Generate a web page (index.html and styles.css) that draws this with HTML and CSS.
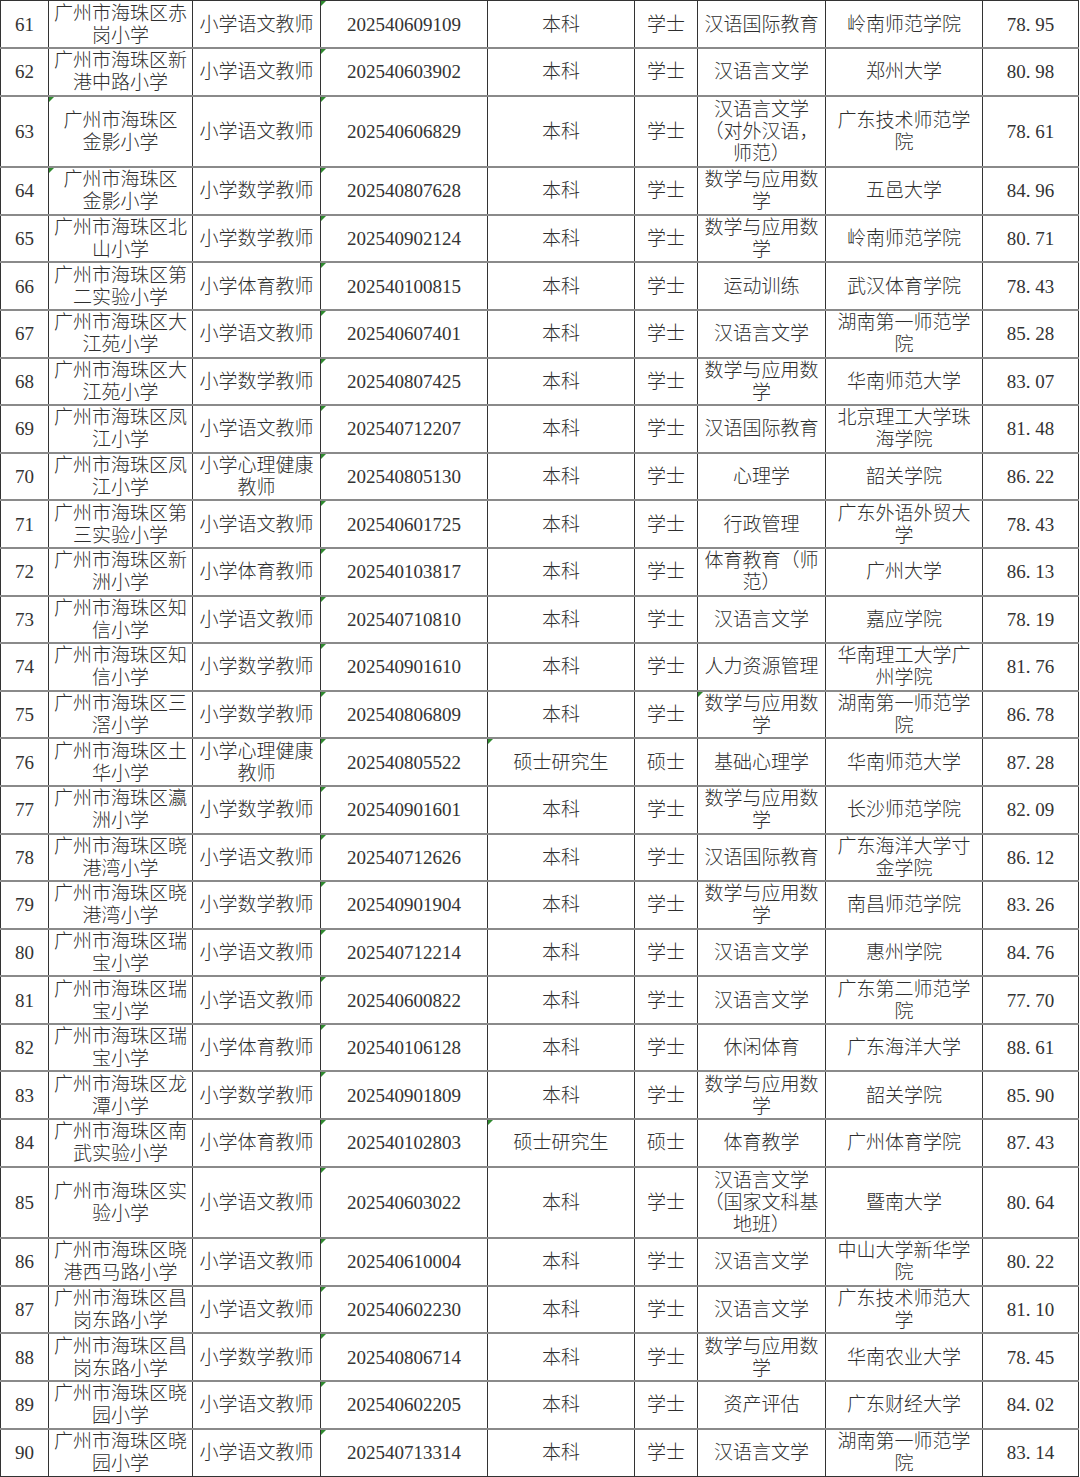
FILE: index.html
```html
<!DOCTYPE html>
<html lang="zh-CN">
<head>
<meta charset="utf-8">
<title>录用名单</title>
<link rel="stylesheet" href="styles.css">
</head>
<body>
<table class="list">
<colgroup>
<col class="c-no"><col class="c-school"><col class="c-pos"><col class="c-id"><col class="c-edu"><col class="c-deg"><col class="c-major"><col class="c-uni"><col class="c-score">
</colgroup>
<tbody>
<tr><td class="num">61</td><td>广州市海珠区赤<br>岗小学</td><td>小学语文教师</td><td class="num f">202540609109</td><td>本科</td><td>学士</td><td>汉语国际教育</td><td>岭南师范学院</td><td class="num">78<span class="dot">.</span>95</td></tr>
<tr><td class="num">62</td><td>广州市海珠区新<br>港中路小学</td><td>小学语文教师</td><td class="num f">202540603902</td><td>本科</td><td>学士</td><td>汉语言文学</td><td>郑州大学</td><td class="num">80<span class="dot">.</span>98</td></tr>
<tr class="tall"><td class="num">63</td><td class="f">广州市海珠区<br>金影小学</td><td>小学语文教师</td><td class="num f">202540606829</td><td>本科</td><td>学士</td><td>汉语言文学<br>（对外汉语，<br>师范）</td><td>广东技术师范学<br>院</td><td class="num">78<span class="dot">.</span>61</td></tr>
<tr><td class="num">64</td><td class="f">广州市海珠区<br>金影小学</td><td>小学数学教师</td><td class="num f">202540807628</td><td>本科</td><td>学士</td><td>数学与应用数<br>学</td><td>五邑大学</td><td class="num">84<span class="dot">.</span>96</td></tr>
<tr><td class="num">65</td><td>广州市海珠区北<br>山小学</td><td>小学数学教师</td><td class="num f">202540902124</td><td>本科</td><td>学士</td><td>数学与应用数<br>学</td><td>岭南师范学院</td><td class="num">80<span class="dot">.</span>71</td></tr>
<tr><td class="num">66</td><td>广州市海珠区第<br>二实验小学</td><td>小学体育教师</td><td class="num f">202540100815</td><td>本科</td><td>学士</td><td>运动训练</td><td>武汉体育学院</td><td class="num">78<span class="dot">.</span>43</td></tr>
<tr><td class="num">67</td><td>广州市海珠区大<br>江苑小学</td><td>小学语文教师</td><td class="num f">202540607401</td><td>本科</td><td>学士</td><td>汉语言文学</td><td>湖南第一师范学<br>院</td><td class="num">85<span class="dot">.</span>28</td></tr>
<tr><td class="num">68</td><td>广州市海珠区大<br>江苑小学</td><td>小学数学教师</td><td class="num f">202540807425</td><td>本科</td><td>学士</td><td>数学与应用数<br>学</td><td>华南师范大学</td><td class="num">83<span class="dot">.</span>07</td></tr>
<tr><td class="num">69</td><td>广州市海珠区凤<br>江小学</td><td>小学语文教师</td><td class="num f">202540712207</td><td>本科</td><td>学士</td><td>汉语国际教育</td><td>北京理工大学珠<br>海学院</td><td class="num">81<span class="dot">.</span>48</td></tr>
<tr><td class="num">70</td><td>广州市海珠区凤<br>江小学</td><td>小学心理健康<br>教师</td><td class="num f">202540805130</td><td>本科</td><td>学士</td><td>心理学</td><td>韶关学院</td><td class="num">86<span class="dot">.</span>22</td></tr>
<tr><td class="num">71</td><td>广州市海珠区第<br>三实验小学</td><td>小学语文教师</td><td class="num f">202540601725</td><td>本科</td><td>学士</td><td>行政管理</td><td>广东外语外贸大<br>学</td><td class="num">78<span class="dot">.</span>43</td></tr>
<tr><td class="num">72</td><td>广州市海珠区新<br>洲小学</td><td>小学体育教师</td><td class="num f">202540103817</td><td>本科</td><td>学士</td><td>体育教育（师<br>范）</td><td>广州大学</td><td class="num">86<span class="dot">.</span>13</td></tr>
<tr><td class="num">73</td><td>广州市海珠区知<br>信小学</td><td>小学语文教师</td><td class="num f">202540710810</td><td>本科</td><td>学士</td><td>汉语言文学</td><td>嘉应学院</td><td class="num">78<span class="dot">.</span>19</td></tr>
<tr><td class="num">74</td><td>广州市海珠区知<br>信小学</td><td>小学数学教师</td><td class="num f">202540901610</td><td>本科</td><td>学士</td><td>人力资源管理</td><td>华南理工大学广<br>州学院</td><td class="num">81<span class="dot">.</span>76</td></tr>
<tr><td class="num">75</td><td>广州市海珠区三<br>滘小学</td><td>小学数学教师</td><td class="num f">202540806809</td><td>本科</td><td>学士</td><td class="f">数学与应用数<br>学</td><td>湖南第一师范学<br>院</td><td class="num">86<span class="dot">.</span>78</td></tr>
<tr><td class="num">76</td><td>广州市海珠区土<br>华小学</td><td>小学心理健康<br>教师</td><td class="num f">202540805522</td><td class="f">硕士研究生</td><td>硕士</td><td>基础心理学</td><td>华南师范大学</td><td class="num">87<span class="dot">.</span>28</td></tr>
<tr><td class="num">77</td><td>广州市海珠区瀛<br>洲小学</td><td>小学数学教师</td><td class="num f">202540901601</td><td>本科</td><td>学士</td><td>数学与应用数<br>学</td><td>长沙师范学院</td><td class="num">82<span class="dot">.</span>09</td></tr>
<tr><td class="num">78</td><td>广州市海珠区晓<br>港湾小学</td><td>小学语文教师</td><td class="num f">202540712626</td><td>本科</td><td>学士</td><td>汉语国际教育</td><td>广东海洋大学寸<br>金学院</td><td class="num">86<span class="dot">.</span>12</td></tr>
<tr><td class="num">79</td><td>广州市海珠区晓<br>港湾小学</td><td>小学数学教师</td><td class="num f">202540901904</td><td>本科</td><td>学士</td><td>数学与应用数<br>学</td><td>南昌师范学院</td><td class="num">83<span class="dot">.</span>26</td></tr>
<tr><td class="num">80</td><td>广州市海珠区瑞<br>宝小学</td><td>小学语文教师</td><td class="num f">202540712214</td><td>本科</td><td>学士</td><td>汉语言文学</td><td>惠州学院</td><td class="num">84<span class="dot">.</span>76</td></tr>
<tr><td class="num">81</td><td>广州市海珠区瑞<br>宝小学</td><td>小学语文教师</td><td class="num f">202540600822</td><td>本科</td><td>学士</td><td>汉语言文学</td><td>广东第二师范学<br>院</td><td class="num">77<span class="dot">.</span>70</td></tr>
<tr><td class="num">82</td><td>广州市海珠区瑞<br>宝小学</td><td>小学体育教师</td><td class="num f">202540106128</td><td>本科</td><td>学士</td><td>休闲体育</td><td>广东海洋大学</td><td class="num">88<span class="dot">.</span>61</td></tr>
<tr><td class="num">83</td><td>广州市海珠区龙<br>潭小学</td><td>小学数学教师</td><td class="num f">202540901809</td><td>本科</td><td>学士</td><td>数学与应用数<br>学</td><td>韶关学院</td><td class="num">85<span class="dot">.</span>90</td></tr>
<tr><td class="num">84</td><td>广州市海珠区南<br>武实验小学</td><td>小学体育教师</td><td class="num f">202540102803</td><td class="f">硕士研究生</td><td>硕士</td><td>体育教学</td><td>广州体育学院</td><td class="num">87<span class="dot">.</span>43</td></tr>
<tr class="tall"><td class="num">85</td><td>广州市海珠区实<br>验小学</td><td>小学语文教师</td><td class="num f">202540603022</td><td>本科</td><td>学士</td><td>汉语言文学<br>（国家文科基<br>地班）</td><td>暨南大学</td><td class="num">80<span class="dot">.</span>64</td></tr>
<tr><td class="num">86</td><td>广州市海珠区晓<br>港西马路小学</td><td>小学语文教师</td><td class="num f">202540610004</td><td>本科</td><td>学士</td><td>汉语言文学</td><td>中山大学新华学<br>院</td><td class="num">80<span class="dot">.</span>22</td></tr>
<tr><td class="num">87</td><td>广州市海珠区昌<br>岗东路小学</td><td>小学语文教师</td><td class="num f">202540602230</td><td>本科</td><td>学士</td><td>汉语言文学</td><td>广东技术师范大<br>学</td><td class="num">81<span class="dot">.</span>10</td></tr>
<tr><td class="num">88</td><td>广州市海珠区昌<br>岗东路小学</td><td>小学数学教师</td><td class="num f">202540806714</td><td>本科</td><td>学士</td><td>数学与应用数<br>学</td><td>华南农业大学</td><td class="num">78<span class="dot">.</span>45</td></tr>
<tr><td class="num">89</td><td>广州市海珠区晓<br>园小学</td><td>小学语文教师</td><td class="num f">202540602205</td><td>本科</td><td>学士</td><td>资产评估</td><td>广东财经大学</td><td class="num">84<span class="dot">.</span>02</td></tr>
<tr><td class="num">90</td><td>广州市海珠区晓<br>园小学</td><td>小学语文教师</td><td class="num f">202540713314</td><td>本科</td><td>学士</td><td>汉语言文学</td><td>湖南第一师范学<br>院</td><td class="num">83<span class="dot">.</span>14</td></tr>
</tbody>
</table>
</body>
</html>
```
FILE: styles.css
```css
html, body {
  margin: 0;
  padding: 0;
  background: #ffffff;
}

.list {
  border-collapse: collapse;
  table-layout: fixed;
  width: 1078px;
  font-family: "Liberation Serif", "Noto Sans CJK SC", serif;
  font-size: 19px;
  font-weight: 300;
  color: #2e2e2e;
}

.c-no { width: 48px; }
.c-school { width: 144px; }
.c-pos { width: 128px; }
.c-id { width: 167px; }
.c-edu { width: 147px; }
.c-deg { width: 63px; }
.c-major { width: 128px; }
.c-uni { width: 157px; }
.c-score { width: 96px; }

.list tr {
  height: 47.6px;
}

.list tr.tall {
  height: 71.5px;
}

.list td {
  position: relative;
  padding: 1px 0 0 0;
  text-align: center;
  vertical-align: middle;
  line-height: 22px;
  white-space: nowrap;
  border-left: 1px solid #333333;
  border-right: 1px solid #333333;
  border-top: 2px solid #8a8a8a;
  border-bottom: 2px solid #8a8a8a;
}

.list tr:first-child td {
  border-top: 1px solid #333333;
}

.list tr:last-child td {
  border-bottom: 1px solid #333333;
}

.list td.num {
  font-weight: 400;
  color: #333333;
}

.dot {
  padding-right: 0.25em;
}

.list td.f::before {
  content: "";
  position: absolute;
  left: 0;
  top: 0;
  width: 0;
  height: 0;
  border-top: 5px solid #2f8a2f;
  border-right: 5px solid transparent;
}
```
